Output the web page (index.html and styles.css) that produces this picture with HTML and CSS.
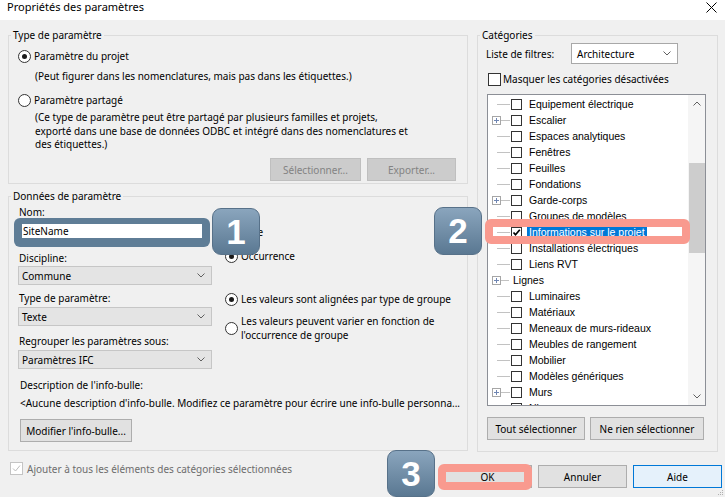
FILE: index.html
```html
<!DOCTYPE html>
<html lang="fr">
<head>
<meta charset="utf-8">
<title>Propriétés des paramètres</title>
<link rel="stylesheet" href="styles.css">
</head>
<body>
<div class="dialog">
  <header class="titlebar">
    <span class="title">Propriétés des paramètres</span>
    <svg class="close" width="11" height="11" viewBox="0 0 11 11"><path d="M0.5 0.5L10.5 10.5M10.5 0.5L0.5 10.5" stroke="#000" stroke-width="1" fill="none"/></svg>
  </header>

  <div class="main">
    <div class="left">
      <fieldset class="group g-type">
        <legend>Type de paramètre</legend>
        <div class="type-body">
          <div class="opt"><span class="radio on"></span>Paramètre du projet</div>
          <p class="note note1">(Peut figurer dans les nomenclatures, mais pas dans les étiquettes.)</p>
          <div class="opt opt2"><span class="radio"></span>Paramètre partagé</div>
          <p class="note note2">(Ce type de paramètre peut être partagé par plusieurs familles et projets,<br>exporté dans une base de données ODBC et intégré dans des nomenclatures et<br>des étiquettes.)</p>
          <div class="btn-row">
            <span class="btn disabled w-sel">Sélectionner...</span>
            <span class="btn disabled w-exp">Exporter...</span>
          </div>
        </div>
      </fieldset>

      <fieldset class="group g-data">
        <legend>Données de paramètre</legend>
        <div class="data-body">
          <div class="data-cols">
            <div class="fields">
              <div class="lbl">Nom:</div>
              <div class="name-mark"><div class="name-input">SiteName</div></div>
              <div class="lbl l-disc">Discipline:</div>
              <div class="combo c1"><span>Commune</span><svg width="8" height="5" viewBox="0 0 8 5"><path d="M0.5 0.5L4 4L7.5 0.5" stroke="#606060" fill="none"/></svg></div>
              <div class="lbl l-type">Type de paramètre:</div>
              <div class="combo c2"><span>Texte</span><svg width="8" height="5" viewBox="0 0 8 5"><path d="M0.5 0.5L4 4L7.5 0.5" stroke="#606060" fill="none"/></svg></div>
              <div class="lbl l-grp">Regrouper les paramètres sous:</div>
              <div class="combo c3"><span>Paramètres IFC</span><svg width="8" height="5" viewBox="0 0 8 5"><path d="M0.5 0.5L4 4L7.5 0.5" stroke="#606060" fill="none"/></svg></div>
            </div>
            <div class="opts">
              <div class="opt"><span class="radio"></span>Type</div>
              <div class="opt o-occ"><span class="radio on"></span>Occurrence</div>
              <div class="opt o-g1"><span class="radio on"></span>Les valeurs sont alignées par type de groupe</div>
              <div class="opt o-g2"><span class="radio"></span><span>Les valeurs peuvent varier en fonction de<br>l'occurrence de groupe</span></div>
            </div>
          </div>
          <div class="lbl l-desc">Description de l'info-bulle:</div>
          <div class="desc">&lt;Aucune description d'info-bulle. Modifiez ce paramètre pour écrire une info-bulle personna...</div>
          <span class="btn w-mod">Modifier l'info-bulle...</span>
        </div>
      </fieldset>
    </div>

    <fieldset class="group g-cat">
      <legend>Catégories</legend>
      <div class="cat-body">
        <div class="filter-row">
          <span class="flbl">Liste de filtres:</span>
          <div class="fcombo"><span>Architecture</span><svg width="8" height="5" viewBox="0 0 8 5"><path d="M0.5 0.5L4 4L7.5 0.5" stroke="#606060" fill="none"/></svg></div>
        </div>
        <div class="mask-row"><span class="cb"></span>Masquer les catégories désactivées</div>
        <div class="tree">
          <div class="rows">
            <div class="node"><span class="exp"></span><span class="conn"></span><span class="tcb"></span><span class="tl">Equipement électrique</span></div>
            <div class="node"><span class="exp plus"></span><span class="conn"></span><span class="tcb"></span><span class="tl">Escalier</span></div>
            <div class="node"><span class="exp"></span><span class="conn"></span><span class="tcb"></span><span class="tl">Espaces analytiques</span></div>
            <div class="node"><span class="exp"></span><span class="conn"></span><span class="tcb"></span><span class="tl">Fenêtres</span></div>
            <div class="node"><span class="exp"></span><span class="conn"></span><span class="tcb"></span><span class="tl">Feuilles</span></div>
            <div class="node"><span class="exp"></span><span class="conn"></span><span class="tcb"></span><span class="tl">Fondations</span></div>
            <div class="node"><span class="exp plus"></span><span class="conn"></span><span class="tcb"></span><span class="tl">Garde-corps</span></div>
            <div class="node"><span class="exp"></span><span class="conn"></span><span class="tcb"></span><span class="tl">Groupes de modèles</span></div>
            <div class="node"><span class="exp"></span><span class="conn"></span><span class="tcb on"><svg width="9" height="9" viewBox="0 0 9 9"><path d="M1.5 4.5L3.5 6.8L7.8 1.8" stroke="#000" stroke-width="1.7" fill="none"/></svg></span><span class="tl sel">Informations sur le projet</span></div>
            <div class="node"><span class="exp"></span><span class="conn"></span><span class="tcb"></span><span class="tl">Installations électriques</span></div>
            <div class="node"><span class="exp"></span><span class="conn"></span><span class="tcb"></span><span class="tl">Liens RVT</span></div>
            <div class="node"><span class="exp plus"></span><span class="conn short"></span><span class="tl nocb">Lignes</span></div>
            <div class="node"><span class="exp"></span><span class="conn"></span><span class="tcb"></span><span class="tl">Luminaires</span></div>
            <div class="node"><span class="exp"></span><span class="conn"></span><span class="tcb"></span><span class="tl">Matériaux</span></div>
            <div class="node"><span class="exp"></span><span class="conn"></span><span class="tcb"></span><span class="tl">Meneaux de murs-rideaux</span></div>
            <div class="node"><span class="exp"></span><span class="conn"></span><span class="tcb"></span><span class="tl">Meubles de rangement</span></div>
            <div class="node"><span class="exp"></span><span class="conn"></span><span class="tcb"></span><span class="tl">Mobilier</span></div>
            <div class="node"><span class="exp"></span><span class="conn"></span><span class="tcb"></span><span class="tl">Modèles génériques</span></div>
            <div class="node"><span class="exp plus"></span><span class="conn"></span><span class="tcb"></span><span class="tl">Murs</span></div>
            <div class="node"><span class="exp"></span><span class="conn"></span><span class="tcb"></span><span class="tl">Niveaux</span></div>
          </div>
          <div class="vscroll">
            <span class="sarr"><svg width="8" height="5" viewBox="0 0 8 5"><path d="M0.5 4.5L4 1L7.5 4.5" stroke="#606060" fill="none"/></svg></span>
            <span class="thumb"></span>
            <span class="sarr down"><svg width="8" height="5" viewBox="0 0 8 5"><path d="M0.5 0.5L4 4L7.5 0.5" stroke="#606060" fill="none"/></svg></span>
          </div>
        </div>
        <div class="cat-btns">
          <span class="btn w-all">Tout sélectionner</span>
          <span class="btn w-none">Ne rien sélectionner</span>
        </div>
      </div>
    </fieldset>
  </div>

  <footer class="footer">
    <div class="ajouter"><span class="cb disabled"><svg width="11" height="11" viewBox="0 0 11 11"><path d="M2 5.5L4.5 8L9 2.5" stroke="#bcbcbc" stroke-width="1" fill="none"/></svg></span>Ajouter à tous les éléments des catégories sélectionnées</div>
    <div class="actions">
      <span class="btn w-dlg">OK</span>
      <span class="btn w-dlg">Annuler</span>
      <span class="btn w-dlg primary">Aide</span>
    </div>
  </footer>

  <div class="badge b1">1</div>
  <div class="badge b2">2</div>
  <div class="badge b3">3</div>
  <div class="mark m-row"></div>
  <div class="mark m-ok"></div>
  <svg class="grip" width="7" height="7" viewBox="0 0 7 7"><g fill="#b0b0b0"><rect x="5" y="1" width="1" height="1"/><rect x="3" y="3" width="1" height="1"/><rect x="5" y="3" width="1" height="1"/><rect x="1" y="5" width="1" height="1"/><rect x="3" y="5" width="1" height="1"/><rect x="5" y="5" width="1" height="1"/></g></svg>
</div>
</body>
</html>
```

FILE: styles.css
```css
* { box-sizing: border-box; }
html, body { margin: 0; padding: 0; }
body {
  width: 725px; height: 497px; overflow: hidden;
  background: #f0f0f0;
  font-family: "Noto Sans", "Liberation Sans", sans-serif;
  font-size: 10px; line-height: 14px; color: #000;
}
.dialog { position: relative; width: 725px; height: 497px; }

/* title bar */
.titlebar { height: 20px; background: #fff; display: flex; justify-content: space-between; align-items: flex-start; }
.title { font-size: 11px; line-height: 13px; padding-left: 7px; }
.close { margin: 2px 8px 0 0; }

/* layout */
.main { display: flex; gap: 9px; padding: 9px 0 0 8px; }
.left { width: 460px; display: flex; flex-direction: column; gap: 6px; }
.group { margin: 0; padding: 0; border: 1px solid #dcdcdc; min-width: 0; }
.group > legend { margin-left: 2px; padding: 0 2px; font-size: 10px; line-height: 13px; }

/* controls */
.opt { display: flex; align-items: center; gap: 3px; height: 16px; white-space: nowrap; }
.radio {
  width: 13px; height: 13px; flex: none; border: 1px solid #333; border-radius: 50%;
  background: #fff; display: inline-flex; align-items: center; justify-content: center;
}
.radio.on::after { content: ""; width: 5px; height: 5px; border-radius: 50%; background: #1a1a1a; }
.cb { width: 13px; height: 13px; flex: none; border: 1px solid #333; background: #fff; display: inline-flex; align-items: center; justify-content: center; }
.cb.disabled { border-color: #c4c4c4; }
.btn {
  display: flex; align-items: center; justify-content: center; height: 23px;
  border: 1px solid #adadad; background: #e1e1e1; white-space: nowrap;
}
.btn.disabled { background: #cccccc; border-color: #bfbfbf; color: #838383; }
.btn.primary { background: #e5f1fb; border-color: #0078d7; }
.combo {
  width: 194px; height: 19px; border: 1px solid #c6c6c6; background: #e4e4e4;
  display: flex; align-items: center; justify-content: space-between; padding: 0 6px 0 3px;
}

/* type group */
.type-body { padding: 6px 11px 2px 9px; }
.note { margin: 0 0 0 17px; }
.note1 { margin-top: 5px; }
.opt2 { margin-top: 9px; }
.note2 { margin-top: 3px; line-height: 13.5px; }
.btn-row { display: flex; justify-content: flex-end; gap: 6px; margin-top: 6.5px; }
.w-sel { width: 91px; }
.w-exp { width: 89px; }

/* data group */
.data-body { padding: 2px 11px 8px 9px; display: flex; flex-direction: column; align-items: flex-start; }
.data-cols { display: flex; gap: 13px; }
.fields { width: 194px; display: flex; flex-direction: column; }
.lbl { line-height: 14px; padding-left: 1px; }
.name-mark { margin: -1px 0 0 -4px; width: 196px; height: 29px; border-radius: 6px; background: #5f7d96; padding: 6px 8px 9px; }
.name-input { background: #fff; height: 14px; line-height: 14px; padding-left: 1px; }
.l-disc { margin-top: 4px; }
.c1 { margin-top: 1px; }
.l-type { margin-top: 6px; }
.c2 { margin-top: 2px; }
.l-grp { margin-top: 8px; }
.c3 { margin-top: 2px; }
.opts { display: flex; flex-direction: column; padding-top: 19px; }
.o-occ { margin-top: 8px; }
.o-g1 { margin-top: 27px; }
.o-g2 { margin-top: 8px; height: 27px; line-height: 13.5px; }
.l-desc { margin-top: 9px; padding-left: 2px; }
.desc { margin-top: 4px; padding-left: 2px; white-space: nowrap; }
.w-mod { width: 112px; margin: 9px 0 0 2px; }

/* categories group */
.g-cat { width: 241px; }
.cat-body { padding: 1px 10px 11px 9px; display: flex; flex-direction: column; }
.filter-row { display: flex; align-items: center; height: 21px; }
.flbl { width: 85px; margin-left: -1px; }
.fcombo {
  width: 107px; height: 21px; border: 1px solid #a8a8a8; background: #fff;
  display: flex; align-items: center; justify-content: space-between; padding: 0 6px 0 5px;
}
.mask-row { display: flex; align-items: center; gap: 2px; height: 14px; margin-top: 8px; padding-left: 1px; }

.tree {
  margin-top: 8px; width: 219px; height: 312px; display: flex; overflow: hidden;
  border: 1px solid #8c8f96; background: #fff;
  font-family: "Liberation Sans", Arial, sans-serif; font-size: 10.5px;
}
.rows { flex: 1; min-width: 0; padding-top: 1px; }
.node { display: flex; align-items: center; height: 16px; padding-left: 4px; white-space: nowrap; }
.exp { width: 9px; height: 9px; flex: none; position: relative; }
.exp:not(.plus)::after { content: ""; position: absolute; left: 5px; right: 0; top: 4px; border-top: 1px solid #c2c2c2; }
.exp.plus {
  border: 1px solid #a6a6a6;
  background:
    linear-gradient(#6f86b3, #6f86b3) center / 5px 1px no-repeat,
    linear-gradient(#6f86b3, #6f86b3) center / 1px 5px no-repeat,
    #fff;
}
.conn { width: 9px; flex: none; border-top: 1px solid #c2c2c2; }
.conn.short { width: 8px; }
.tcb { width: 11px; height: 11px; flex: none; margin-left: 1px; border: 1px solid #333; background: #fff; display: inline-flex; align-items: center; justify-content: center; }
.tl { margin-left: 5px; padding: 0 2px; line-height: 16px; }
.tl.nocb { margin-left: 2px; }
.tl.sel { background: #0078d7; color: #fff; }

.vscroll { width: 17px; flex: none; background: #f5f5f5; display: flex; flex-direction: column; }
.sarr { height: 17px; flex: none; display: flex; align-items: center; justify-content: center; }
.sarr.down { margin-top: auto; }
.thumb { display: block; height: 90px; margin: 51px 0 0 1px; background: #cdcdcd; }

.cat-btns { display: flex; gap: 5px; margin-top: 11px; }
.w-all { width: 98px; }
.w-none { width: 114px; }

/* footer */
.footer { display: flex; align-items: flex-start; padding: 10px 3px 0 10px; }
.ajouter { display: flex; align-items: center; gap: 4px; height: 13px; color: #6d6d6d; white-space: nowrap; }
.actions { margin-left: auto; margin-top: 3px; display: flex; gap: 6px; }
.w-dlg { width: 89px; }

/* annotations laid over the dialog */
.badge {
  position: absolute; width: 48px; height: 47px; border-radius: 9px;
  border: 1px solid #577189;
  background: linear-gradient(#8aa5bd, #5a7892);
  color: #fff; text-align: center;
  font: bold 35px/45px "Liberation Sans", Arial, sans-serif;
}
.b1 { left: 212px; top: 208px; }
.b2 { left: 434px; top: 207px; height: 48px; }
.b3 { left: 387px; top: 450px; }
.mark { position: absolute; border: 8px solid #f99a8f; border-radius: 6px; }
.m-row { left: 485px; top: 219px; width: 205px; height: 25px; }
.m-ok { left: 438px; top: 464px; width: 94px; height: 26px; }
.grip { position: absolute; right: 1px; bottom: 1px; }
```
